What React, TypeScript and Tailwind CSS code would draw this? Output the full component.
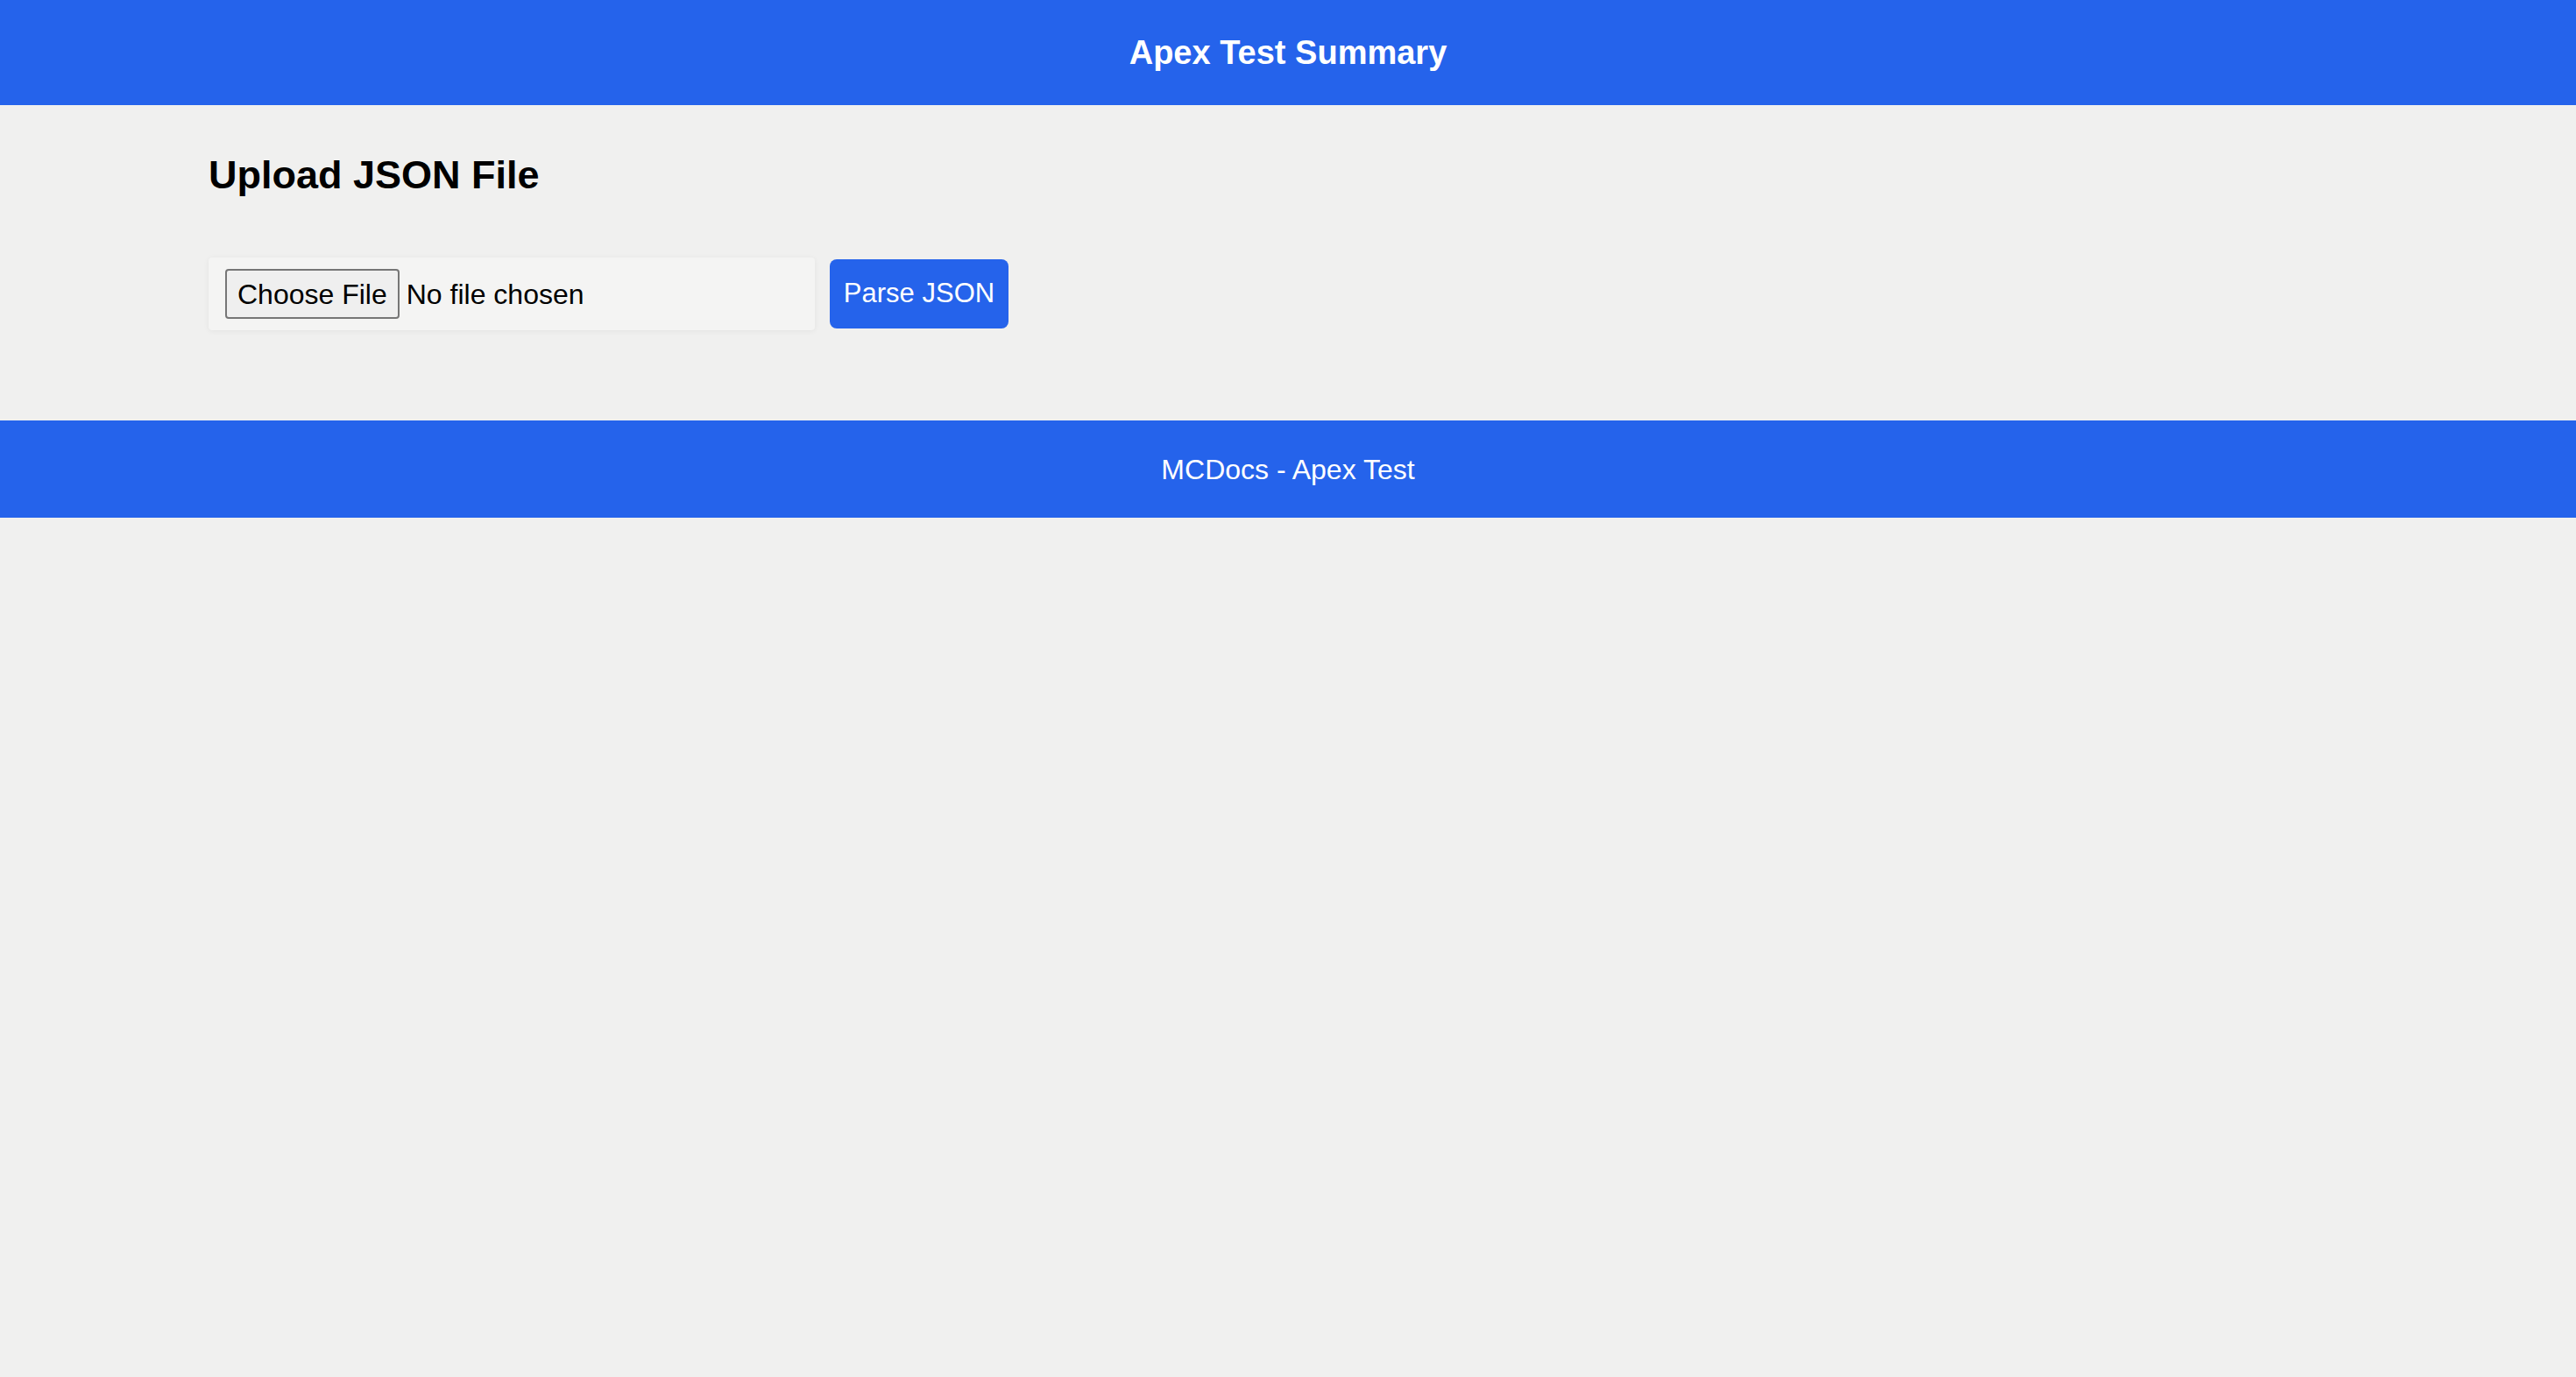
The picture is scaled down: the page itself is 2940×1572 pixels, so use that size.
const App = () => {
  return (
    <div
      className="min-h-screen bg-[#f0f0ef] text-black"
      style={{ fontFamily: '"Liberation Sans", Arial, sans-serif' }}
    >
      <header className="h-[120px] bg-[#2563eb] flex items-center justify-center">
        <h1 className="text-[38px] font-bold text-white">Apex Test Summary</h1>
      </header>

      <main className="mx-auto w-[2560px] px-[48px] pt-[48px] pb-[103px]">
        <h2 className="text-[45px] leading-[64px] font-bold">Upload JSON File</h2>

        {/* file picker + parse button */}
        <div className="mt-[62px] flex items-center">
          <div className="w-[692px] h-[83px] flex items-center pl-[19px] bg-[#f4f4f3] shadow-[0_1px_6px_rgba(0,0,0,0.06)] rounded-[4px]">
            <button className="h-[57px] px-[12px] text-[32px] bg-[#efefef] border-2 border-[#767676] rounded-[4px]">
              Choose File
            </button>
            <span className="ml-[8px] text-[32px]">No file chosen</span>
          </div>
          <button className="ml-[17px] w-[204px] h-[79px] bg-[#2563eb] text-white text-[31px] rounded-[8px]">
            Parse JSON
          </button>
        </div>
      </main>

      <footer className="h-[111px] bg-[#2563eb] flex items-center justify-center">
        <p className="text-[32px] text-white">MCDocs - Apex Test</p>
      </footer>
    </div>
  );
};

export default App;
